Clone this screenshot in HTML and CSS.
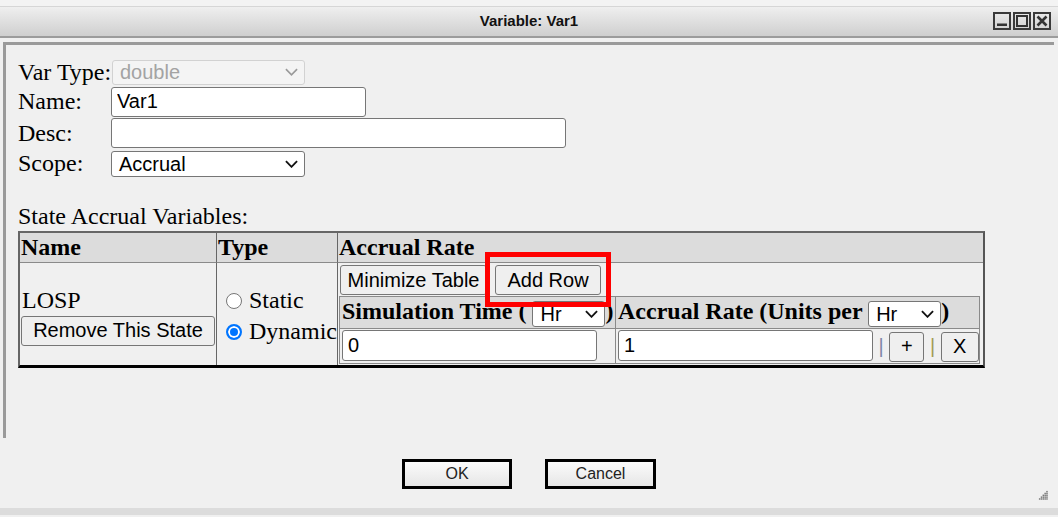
FILE: index.html
```html
<!DOCTYPE html>
<html lang="en">
<head>
<meta charset="utf-8">
<title>Variable: Var1</title>
<link rel="stylesheet" href="styles.css">
</head>
<body>
<div class="window">
  <div class="topstrip"></div>
  <div class="titlebar">
    <div class="spacer"></div>
    <div class="title">Variable: Var1</div>
    <div class="winbtns">
      <span class="wbtn"><svg viewBox="0 0 14 14" width="14" height="14"><rect x="2" y="9.5" width="10" height="2.5" fill="#333"/></svg></span>
      <span class="wbtn"><svg viewBox="0 0 14 14" width="14" height="14"><rect x="2" y="2" width="10" height="10" fill="none" stroke="#333" stroke-width="2"/></svg></span>
      <span class="wbtn"><svg viewBox="0 0 14 14" width="14" height="14"><path d="M2.5 2.5 L11.5 11.5 M11.5 2.5 L2.5 11.5" stroke="#333" stroke-width="2.6" fill="none"/></svg></span>
    </div>
  </div>
  <div class="gap"></div>
  <div class="panel">
    <div class="form">
      <div class="lbl">Var Type:</div>
      <div class="cell"><div class="sel sel-disabled w193"><span>double</span><svg class="chev" viewBox="0 0 14 8" width="13" height="8"><path d="M1 1 L7 7 L13 1" fill="none" stroke="currentColor" stroke-width="1.8"/></svg></div></div>
      <div class="lbl">Name:</div>
      <div class="cell"><input class="txt w254" type="text" value="Var1"></div>
      <div class="lbl">Desc:</div>
      <div class="cell"><input class="txt w454" type="text" value=""></div>
      <div class="lbl">Scope:</div>
      <div class="cell"><div class="sel w194 h26"><span>Accrual</span><svg class="chev" viewBox="0 0 14 8" width="13" height="8"><path d="M1 1 L7 7 L13 1" fill="none" stroke="currentColor" stroke-width="2"/></svg></div></div>
    </div>
    <div class="section-label">State Accrual Variables:</div>
    <table class="states">
      <colgroup><col class="c-name"><col class="c-type"><col></colgroup>
      <thead>
        <tr><th>Name</th><th>Type</th><th class="last">Accrual Rate</th></tr>
      </thead>
      <tbody>
        <tr>
          <td class="name-cell">
            <div class="state-name">LOSP</div>
            <button class="btn remove">Remove This State</button>
          </td>
          <td class="type-cell">
            <label class="radio"><span class="dot"></span><span>Static</span></label>
            <label class="radio"><span class="dot on"></span><span>Dynamic</span></label>
          </td>
          <td class="rate-cell last">
            <div class="rate-actions">
              <button class="btn minimize">Minimize Table</button>
              <button class="btn addrow">Add Row</button>
              <div class="highlight"></div>
            </div>
            <table class="rates">
              <colgroup><col class="c-time"><col></colgroup>
              <thead>
                <tr>
                  <th>Simulation Time ( <span class="sel w73 h26"><span>Hr</span><svg class="chev" viewBox="0 0 14 8" width="13" height="8"><path d="M1 1 L7 7 L13 1" fill="none" stroke="currentColor" stroke-width="2"/></svg></span>)</th>
                  <th>Accrual Rate (Units per <span class="sel w73 h26"><span>Hr</span><svg class="chev" viewBox="0 0 14 8" width="13" height="8"><path d="M1 1 L7 7 L13 1" fill="none" stroke="currentColor" stroke-width="2"/></svg></span>)</th>
                </tr>
              </thead>
              <tbody>
                <tr>
                  <td><input class="txt w255 h31" type="text" value="0"></td>
                  <td class="row-tools"><input class="txt w255 h31" type="text" value="1"> <span class="pipe blue">|</span> <button class="btn small plus">+</button> <span class="pipe olive">|</span> <button class="btn small x">X</button></td>
                </tr>
              </tbody>
            </table>
          </td>
        </tr>
      </tbody>
    </table>
  </div>
  <div class="footer">
    <button class="dlg">OK</button>
    <button class="dlg cancel">Cancel</button>
    <svg class="grip" viewBox="0 0 12 12" width="11" height="11">
      <g fill="#777">
        <rect x="9" y="1" width="1.6" height="1.6"/>
        <rect x="7" y="3" width="1.6" height="1.6"/><rect x="9" y="3" width="1.6" height="1.6"/>
        <rect x="5" y="5" width="1.6" height="1.6"/><rect x="7" y="5" width="1.6" height="1.6"/><rect x="9" y="5" width="1.6" height="1.6"/>
        <rect x="3" y="7" width="1.6" height="1.6"/><rect x="5" y="7" width="1.6" height="1.6"/><rect x="7" y="7" width="1.6" height="1.6"/><rect x="9" y="7" width="1.6" height="1.6"/>
        <rect x="1" y="9" width="1.6" height="1.6"/><rect x="3" y="9" width="1.6" height="1.6"/><rect x="5" y="9" width="1.6" height="1.6"/><rect x="7" y="9" width="1.6" height="1.6"/><rect x="9" y="9" width="1.6" height="1.6"/>
      </g>
    </svg>
  </div>
  <div class="bottomstrip"></div>
</div>
</body>
</html>
```

FILE: styles.css
```css
html, body {
  margin: 0;
  padding: 0;
  background: #f0f0f0;
}
.window {
  width: 1058px;
  height: 517px;
  overflow: hidden;
  background: #f0f0f0;
  font-family: "Liberation Serif", "Times New Roman", serif;
  color: #000;
}
.topstrip {
  height: 6px;
  background: #f3f3f3;
  border-bottom: 1px solid #d6d6d6;
}
.titlebar {
  height: 31px;
  box-sizing: border-box;
  background: linear-gradient(#efefef, #cfcfcf);
  border-bottom: 2px solid #9c9c9c;
  display: grid;
  grid-template-columns: 1fr auto 1fr;
  align-items: start;
}
.title {
  padding-top: 5px;
  font: bold 15px/18px "Liberation Sans", Arial, sans-serif;
  color: #111;
}
.winbtns {
  justify-self: end;
  display: flex;
  gap: 2px;
  margin-top: 5px;
  margin-right: 7px;
}
.wbtn {
  width: 18px;
  height: 18px;
  box-sizing: border-box;
  border: 2px solid #3a3a3a;
  background: linear-gradient(#e8e8e8, #d4d4d4);
  display: flex;
  align-items: center;
  justify-content: center;
}
.wbtn svg { display: block; }
.gap { height: 4px; }
.panel {
  height: 396px;
  box-sizing: border-box;
  margin-left: 3px;
  margin-right: 4px;
  border-left: 3px solid #9a9a9a;
  border-top: 3px solid #9a9a9a;
  padding: 13px 0 0 12px;
}
.form {
  display: grid;
  grid-template-columns: 93px auto;
  grid-template-rows: 28px 31px 32px 29px;
  align-items: center;
}
.lbl {
  font-size: 24px;
  line-height: 27px;
  white-space: nowrap;
}
.cell { display: flex; align-items: center; }
.sel {
  display: inline-flex;
  align-items: center;
  justify-content: space-between;
  box-sizing: border-box;
  height: 25px;
  border: 1px solid #767676;
  border-radius: 3px;
  background: #fff;
  padding: 0 6px 0 7px;
  font: 20px/22px "Liberation Sans", Arial, sans-serif;
  font-weight: normal;
  color: #000;
  vertical-align: middle;
}
.sel .chev { display: block; color: #111; }
.sel-disabled {
  border-color: #d2d2d2;
  background: #f4f4f4;
  color: #a3a3a3;
  margin-left: 1px;
}
.sel-disabled .chev { color: #9a9a9a; }
.w193 { width: 193px; }
.w194 { width: 194px; }
.w73 { width: 73px; }
.h26 { height: 26px; }
.txt {
  box-sizing: border-box;
  height: 30px;
  border: 1px solid #767676;
  border-radius: 3px;
  background: #fff;
  padding: 0 5px;
  font: 20px "Liberation Sans", Arial, sans-serif;
  color: #000;
  margin: 0;
  outline: none;
}
.w254 { width: 255px; }
.w454 { width: 455px; }
.w255 { width: 255px; }
.h31 { height: 31px; }
.section-label {
  margin-top: 25px;
  font-size: 24px;
  line-height: 26px;
  margin-bottom: 2px;
}
.states {
  width: 967px;
  table-layout: fixed;
  border-collapse: separate;
  border-spacing: 0;
  border-style: solid;
  border-width: 2px 2px 3px 2px;
  border-color: #666 #555 #000 #666;
}
.c-name { width: 197px; }
.c-type { width: 121px; }
.states > thead > tr > th {
  height: 30px;
  padding: 0 1px;
  background: #dcdcdc;
  text-align: left;
  font-size: 24px;
  font-weight: bold;
  border-bottom: 1px solid #8a8a8a;
  border-right: 1px solid #666;
  box-sizing: border-box;
}
.states > thead > tr > th.last,
.states > tbody > tr > td.last { border-right: none; }
.states > tbody > tr > td {
  height: 102px;
  padding: 0;
  border-right: 1px solid #666;
  vertical-align: middle;
  box-sizing: border-box;
}
.name-cell { padding-left: 1px !important; padding-top: 4px !important; }
.state-name {
  font-size: 24px;
  line-height: 27px;
  padding-left: 1px;
  margin-bottom: 2px;
}
.btn {
  box-sizing: border-box;
  border: 1px solid #767676;
  border-radius: 3px;
  background: #efefef;
  font: 20px "Liberation Sans", Arial, sans-serif;
  color: #000;
  padding: 0;
  margin: 0;
  vertical-align: middle;
}
.remove { width: 194px; height: 30px; }
.type-cell { padding-left: 8px !important; padding-top: 3px !important; }
.radio {
  display: flex;
  align-items: center;
  font-size: 24px;
  line-height: 31px;
}
.dot {
  flex: none;
  box-sizing: border-box;
  width: 16px;
  height: 16px;
  margin: 1px 7px 0 1px;
  border: 1px solid #767676;
  border-radius: 50%;
  background: #fff;
}
.dot.on {
  border: 2px solid #0075ff;
  background: #0075ff;
  box-shadow: inset 0 0 0 2px #fff;
}
.rate-cell { vertical-align: top !important; padding: 2px 1px 0 1px !important; }
.rate-actions {
  position: relative;
  display: flex;
  gap: 8px;
  padding-left: 1px;
  margin-bottom: 1px;
}
.minimize { width: 147px; height: 30px; }
.addrow { width: 106px; height: 30px; }
.highlight {
  position: absolute;
  left: 146px;
  top: -13px;
  width: 126px;
  height: 55px;
  box-sizing: border-box;
  border: 5px solid #ff0000;
  z-index: 2;
}
.rates {
  width: 641px;
  table-layout: fixed;
  border-collapse: collapse;
  border: 1px solid #8a8a8a;
}
.c-time { width: 276px; }
.rates th {
  height: 32px;
  padding: 0 2px;
  background: #dcdcdc;
  text-align: left;
  font-size: 24px;
  font-weight: bold;
  white-space: nowrap;
  border: 1px solid #8a8a8a;
  box-sizing: border-box;
}
.rates td {
  height: 34px;
  padding: 1px 1px 1px 2px;
  border: 1px solid #8a8a8a;
  white-space: nowrap;
  font: 20px "Liberation Sans", Arial, sans-serif;
  box-sizing: border-box;
}
.pipe { font: 20px "Liberation Sans", Arial, sans-serif; vertical-align: middle; }
.pipe.blue { color: #7f88a8; }
.pipe.olive { color: #a39b55; }
.small { height: 30px; }
.plus { width: 35px; }
.x { width: 38px; }
.footer {
  position: relative;
  height: 70px;
  box-sizing: border-box;
  padding-top: 21px;
  display: flex;
  justify-content: center;
  align-items: flex-start;
  gap: 33px;
}
.dlg {
  width: 110px;
  height: 30px;
  box-sizing: border-box;
  border: 3px solid #000;
  background: linear-gradient(#fbfbfb, #e6e6e6);
  font: 16px "Liberation Sans", Arial, sans-serif;
  color: #222;
  padding: 0;
  margin: 0;
}
.cancel { width: 111px; }
.grip {
  position: absolute;
  right: 9px;
  bottom: 7px;
}
.bottomstrip {
  height: 7px;
  background: #dcdcdc;
}
```
